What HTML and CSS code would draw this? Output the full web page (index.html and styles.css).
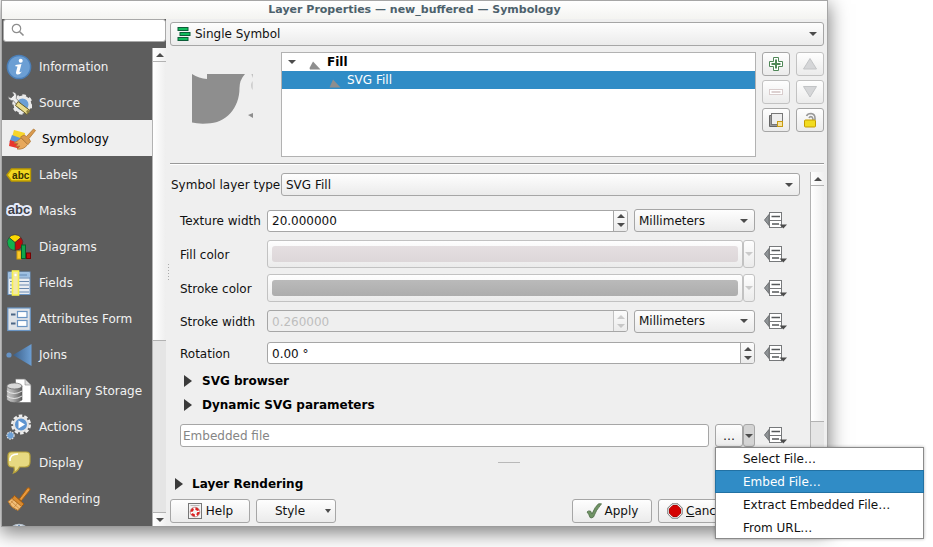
FILE: index.html
```html
<!DOCTYPE html>
<html lang="en">
<head>
<meta charset="utf-8">
<title>Layer Properties</title>
<link rel="stylesheet" href="styles.css">
</head>
<body>
<svg class="defs" aria-hidden="true">
  <symbol id="override" viewBox="0 0 23 17">
    <path d="M0.5 8 L5 2.5 V13.5 Z" fill="#8f9396" stroke="#6f7275"/>
    <rect x="5.5" y="0.5" width="12" height="15" fill="#fff" stroke="#77797b"/>
    <path d="M7.500 4.500 H16 M8 12 H15" stroke="#55585a" stroke-width="1.500"/>
    <path d="M6 8.500 H17.500" stroke="#77797b"/>
    <path d="M15.500 12.500 H23 L19.250 16.500 Z" fill="#4c4c4c"/>
  </symbol>
</svg>
<div class="window">
  <header class="titlebar">Layer Properties — new_buffered — Symbology</header>
  <div class="body">
    <aside class="sidebar">
      <div class="search">
        <svg width="14" height="14" viewBox="0 0 14 14" fill="none" stroke="#8d8d8d"><circle cx="5.500" cy="5.500" r="4.200" stroke-width="1.200"/><path d="M8.700 8.700 L12.500 12.500" stroke-width="1.600"/></svg>
        <input type="text" aria-label="Search">
      </div>
      <div class="side-body">
        <nav class="pages">
          <a href="#"><svg width="26" height="26" viewBox="0 0 26 26"><circle cx="13" cy="13" r="11.600" fill="#6c9fd4" stroke="#4b7fb8" stroke-width="1.500"/><circle cx="14.700" cy="6.700" r="2" fill="#fff"/><path d="M9.500 11 L15.500 10 L13.500 17.500 Q13.300 19 16 17.500 Q14 20.800 11.500 20.500 Q9.400 20 10.200 17.500 L11.500 12.500 L9.300 12.300 Z" fill="#fff"/></svg>Information</a>
          <a href="#"><svg width="26" height="26" viewBox="0 0 26 26"><circle cx="16.500" cy="14.500" r="7.500" fill="#6c9fd4" stroke="#e9e9e9" stroke-width="3"/><circle cx="16.500" cy="14.500" r="9" fill="none" stroke="#e9e9e9" stroke-width="2.500" stroke-dasharray="3.500 3.500"/><path d="M2 6.500 L5 8 L8 5 L6 2 Q10 1.500 10.500 5.500 L10.300 8.500 L14 12.500 L11 15 L7.500 10.800 Q3 11 2 6.500 Z" fill="#eee" stroke="#666" stroke-width=".7"/><path d="M12 11.500 L24 20.500 L21 24.500 L9.500 15.500 Z" fill="#eadb89" stroke="#665b25"/><circle cx="21.800" cy="21.600" r="1.500" fill="#8d7f40"/></svg>Source</a>
          <a href="#" class="current"><svg width="28" height="26" viewBox="0 0 28 26"><path d="M6 4 L17 7 L16 15 L4 11 Z" fill="#f7d52b"/><path d="M4 9 L15 13 L13 20 L1.500 16 Z" fill="#5c97d8"/><path d="M2 14 L14 18 L13 23 L1 20 Z" fill="#e9362c"/><path d="M13 12 L19.500 18.500 Q16 24 9 23 L12 20 L8 20.500 L10 17.500 L6 17 Q10 15 13 12 Z" fill="#e7a85c" stroke="#b17732" stroke-width=".8"/><path d="M12.500 11 L16 9 L18.500 10.500 L25.500 3 L27.500 4.500 L21 12.500 L22.500 15.500 L20 18.500 Z" fill="#d99a4e" stroke="#b17732" stroke-width=".8"/></svg>Symbology</a>
          <a href="#"><svg width="26" height="26" viewBox="0 0 26 26"><path d="M1 13 L5.500 7 H24.500 V19 H5.500 Z" fill="#f3d81f" stroke="#bd9b00" stroke-width="1.400"/><text x="14.700" y="16.500" text-anchor="middle" class="tag tag-small">abc</text></svg>Labels</a>
          <a href="#"><svg width="26" height="26" viewBox="0 0 26 26"><text x="13" y="16" text-anchor="middle" class="tag tag-mask">abc</text></svg>Masks</a>
          <a href="#"><svg width="26" height="26" viewBox="0 0 26 26"><g stroke="#333" stroke-width=".6"><path d="M9 8.500 L3 3.500 A7.800 7.800 0 0 1 15 3.500 Z" fill="#fcd900"/><path d="M9 8.500 L15 3.500 A7.800 7.800 0 0 1 9 16.300 Z" fill="#be0b0b"/><path d="M9 8.500 V16.300 A7.800 7.800 0 0 1 3 3.500 Z" fill="#12b04e"/></g><rect x="11" y="17" width="4" height="8" fill="#fcc92d" stroke="#d3a006"/><rect x="15.500" y="11" width="4" height="13.500" fill="#10a64a" stroke="#075f2a"/><rect x="20.500" y="19" width="4" height="5.500" fill="#b80d0d" stroke="#700"/></svg>Diagrams</a>
          <a href="#"><svg width="26" height="26" viewBox="0 0 26 26"><rect x="2" y="2" width="22" height="22.500" fill="#e9edf2" stroke="#6a95c4"/><path d="M2.500 5 H23.500" stroke="#9cbfe3" stroke-width="5"/><path d="M13 5 H21 M3 8 H24" stroke="#6288b3"/><path d="M4 11.500 H23 M4 15 H23 M4 18.500 H23 M4 22 H23" stroke="#6a89ae"/><rect x="6.500" y="1" width="6" height="24" fill="#f3e9a8" stroke="#f7f04e" stroke-width="1.600"/><circle cx="9.500" cy="5" r="1.200" fill="#fff"/></svg>Fields</a>
          <a href="#"><svg width="26" height="26" viewBox="0 0 26 26"><rect x="1.800" y="2" width="22.500" height="22.500" fill="#dfe3e8" stroke="#6a95c4" stroke-width="1.200"/><path d="M5 8.500 H9.500 M5 17.500 H9.500" stroke="#4c6685" stroke-width="2"/><rect x="11.500" y="5.500" width="9.500" height="6" fill="#fff" stroke="#6a95c4" stroke-width="1.200"/><rect x="11.500" y="14.500" width="9.500" height="6" fill="#fff" stroke="#6a95c4" stroke-width="1.200"/></svg>Attributes Form</a>
          <a href="#"><svg width="26" height="26" viewBox="0 0 26 26"><defs><linearGradient id="join"><stop offset="0" stop-color="#3c5f88"/><stop offset="1" stop-color="#6c9fd4"/></linearGradient></defs><circle cx="3" cy="13" r="2.600" fill="#6693c6"/><path d="M7 13 L25.500 2 V24 Z" fill="url(#join)"/></svg>Joins</a>
          <a href="#"><svg width="26" height="26" viewBox="0 0 26 26"><defs><linearGradient id="drum"><stop offset="0" stop-color="#c9c9c9"/><stop offset=".4" stop-color="#aaa"/><stop offset="1" stop-color="#5c5c5c"/></linearGradient></defs><path d="M9.500 1 H19 L25 7 V24.500 H9.500 Z" fill="#fff" stroke="#777" stroke-width=".8"/><path d="M19 1 V7 H25 Z" fill="#ddd" stroke="#888" stroke-width=".6"/><path d="M.8 8 V22 Q8 27.500 16 22 V8 Z" fill="url(#drum)" stroke="#555" stroke-width=".6"/><ellipse cx="8.400" cy="8" rx="7.600" ry="3" fill="#d8d8d8" stroke="#666" stroke-width=".7"/><path d="M.8 13 Q8 18 16 13 M.8 18 Q8 23 16 18" fill="none" stroke="#eee" stroke-width=".9"/></svg>Auxiliary Storage</a>
          <a href="#"><svg width="26" height="26" viewBox="0 0 26 26"><circle cx="15" cy="10.500" r="8.700" fill="none" stroke="#eee" stroke-width="2.600" stroke-dasharray="3.500 2"/><circle cx="15" cy="10.500" r="7" fill="#5e95d1" stroke="#e5e5e5" stroke-width="2"/><path d="M12.500 6.500 L19 10.500 L12.500 14.500 Z" fill="#fff"/><circle cx="4.500" cy="21.500" r="3.600" fill="#6c9fd4" stroke="#ddd" stroke-width="1.200" stroke-dasharray="1.600 1"/></svg>Actions</a>
          <a href="#"><svg width="26" height="26" viewBox="0 0 26 26"><path d="M5.500 2 H20 Q24 2 24 6 V12 Q24 17 19 17 H13.500 Q12 21 7.500 23 Q9 20 8 17 H6 Q2 17 2 12.500 V6 Q2 2 5.500 2 Z" fill="#e7d981" stroke="#b7a23a" stroke-width="1.200"/><path d="M4 11 Q3.500 4 12 4" fill="none" stroke="#fff" stroke-width="1.600"/></svg>Display</a>
          <a href="#"><svg width="26" height="26" viewBox="0 0 26 26"><path d="M13 13.500 L21.500 2 Q24.500 1 24 4 L15.500 14.500 Z" fill="#e9993c" stroke="#a85f10"/><path d="M8.500 9.500 L18 18 L15.500 20.500 L6 12.500 Z" fill="#d98a2e" stroke="#a05a12"/><path d="M6 12.500 L15.500 20.500 L12 24.500 Q5 22 2 15.500 Z" fill="#f1bd77" stroke="#b8762a"/><path d="M5 15 L13 22.500 M8 13.500 L4 18 M11.500 17 L8 21.500" stroke="#b8762a" stroke-width=".6"/></svg>Rendering</a>
          <a href="#" aria-label="Next page"><svg width="26" height="26" viewBox="0 0 26 26"><circle cx="13" cy="13" r="10.500" fill="#eef2f6" stroke="#b9c4cf" stroke-width="1.500"/><path d="M13 3 V7 M8 4 L9.500 7.500 M18 4 L16.500 7.500" stroke="#5b7fa8" stroke-width="1.600"/></svg></a>
        </nav>
        <div class="scrollbar">
          <span class="sb-btn"><i class="up"></i></span>
          <span class="thumb side-thumb"></span>
          <span class="track"></span>
          <span class="sb-btn sb-down"><i class="down"></i></span>
        </div>
      </div>
    </aside>
    <div class="splitter"><span></span></div>
    <main class="main">
      <div class="combo renderer">
        <svg width="14" height="14" viewBox="0 0 14 14" fill="#12bb5c" stroke="#0b5c38"><rect x="1" y=".5" width="10" height="3"/><rect x="3" y="5.500" width="10" height="3"/><rect x="1" y="10.500" width="10" height="3"/></svg>
        <select aria-label="Renderer"><option>Single Symbol</option></select>
        <i class="down"></i>
      </div>
      <section class="symbol">
        <svg class="preview" viewBox="0 0 111 105" fill="#8e8e8e"><path d="M22 22 Q29 26.500 37 27 V22 H75 Q69.500 28 69.500 36 C69.500 56 56 71.500 37 71.500 Q28 72 22 70.500 Z"/><path opacity=".5" d="M83 22 L81.500 22 L82.500 26 Z M82.500 29 Q80 33 82.500 38 Z"/><path d="M78 63 L83 61 V66 Z"/></svg>
        <ul class="tree">
          <li><i class="down"></i><svg width="12" height="9" viewBox="0 0 12 9"><path d="M1 8.500 L.500 7 L4 .5 L11.500 8.500 Z" fill="#8e8e8e"/></svg><b>Fill</b></li>
          <li class="child"><svg width="12" height="9" viewBox="0 0 12 9"><path d="M.5 8.500 L4 .5 L11.500 8.500 Z" fill="#8e8e8e"/></svg>SVG Fill</li>
        </ul>
        <div class="tools">
          <button type="button" aria-label="Add"><svg width="16" height="16" viewBox="0 0 16 16"><path d="M5.500 1.500 H10.500 V5.500 H14.500 V10.500 H10.500 V14.500 H5.500 V10.500 H1.500 V5.500 H5.500 Z" fill="#fff" stroke="#4f8757"/><path d="M8 3.500 V12.500 M3.500 8 H12.500" stroke="#4f8757" stroke-width="2"/></svg></button>
          <button type="button" aria-label="Move up" disabled><svg width="16" height="16" viewBox="0 0 16 16"><path d="M8 2.500 L14.500 13 H1.500 Z" fill="#d5d6d8" stroke="#c2c4c6"/></svg></button>
          <button type="button" aria-label="Remove" disabled><svg width="16" height="16" viewBox="0 0 16 16"><rect x="1.500" y="5.500" width="13" height="5" fill="#fff" stroke="#d9cdcd"/><path d="M3.500 8 H12.500" stroke="#ddd1d1" stroke-width="2"/></svg></button>
          <button type="button" aria-label="Move down" disabled><svg width="16" height="16" viewBox="0 0 16 16"><path d="M1.500 2.500 H14.500 L8 13 Z" fill="#d5d6d8" stroke="#c2c4c6"/></svg></button>
          <button type="button" aria-label="Duplicate"><svg width="16" height="16" viewBox="0 0 16 16"><path d="M1.500 3.500 H4 V12.500 H12 V14.500 H1.500 Z" fill="#999" stroke="#666"/><rect x="3.500" y="1.500" width="11" height="11" fill="#eee" stroke="#777"/><rect x="9.500" y="9.500" width="5" height="5" fill="#f7e3a0" stroke="#c79b13"/></svg></button>
          <button type="button" aria-label="Lock"><svg width="16" height="16" viewBox="0 0 16 16"><path d="M4.500 4 Q5.500 1.500 9 1.500 Q13 2 13 6 V8 M7 6 Q8 4 10 5 Q11 6 11 8" fill="none" stroke="#999" stroke-width="1.600"/><rect x="2.500" y="8" width="11" height="7" rx="1" fill="#f2dc20" stroke="#c49b00"/></svg></button>
        </div>
      </section>
      <hr>
      <section class="scroll">
        <div class="form">
          <div class="type-row">
            <label for="type">Symbol layer type</label>
            <div class="combo"><select id="type"><option>SVG Fill</option></select><i class="down"></i></div>
          </div>
          <div class="fields">
            <label for="tex">Texture width</label>
            <div class="spin"><input id="tex" type="text" value="20.000000"><span><i class="up"></i><i class="down"></i></span></div>
            <div class="combo"><select aria-label="Texture width unit"><option>Millimeters</option></select><i class="down"></i></div>
            <button type="button" class="override" aria-label="Override"><svg width="23" height="17"><use href="#override"/></svg></button>

            <label for="fillc">Fill color</label>
            <div class="color"><button type="button" id="fillc" disabled><span class="swatch"></span></button><button type="button" class="arrow" aria-label="Fill color menu" disabled><i class="down"></i></button></div>
            <button type="button" class="override" aria-label="Override"><svg width="23" height="17"><use href="#override"/></svg></button>

            <label for="strokec">Stroke color</label>
            <div class="color"><button type="button" id="strokec" disabled><span class="swatch dark"></span></button><button type="button" class="arrow" aria-label="Stroke color menu" disabled><i class="down"></i></button></div>
            <button type="button" class="override" aria-label="Override"><svg width="23" height="17"><use href="#override"/></svg></button>

            <label for="strokew">Stroke width</label>
            <div class="spin off"><input id="strokew" type="text" value="0.260000" disabled><span><i class="up"></i><i class="down"></i></span></div>
            <div class="combo"><select aria-label="Stroke width unit"><option>Millimeters</option></select><i class="down"></i></div>
            <button type="button" class="override" aria-label="Override"><svg width="23" height="17"><use href="#override"/></svg></button>

            <label for="rot">Rotation</label>
            <div class="spin wide"><input id="rot" type="text" value="0.00 °"><span><i class="up"></i><i class="down"></i></span></div>
            <button type="button" class="override" aria-label="Override"><svg width="23" height="17"><use href="#override"/></svg></button>
          </div>
          <button type="button" class="group"><i class="right"></i>SVG browser</button>
          <button type="button" class="group"><i class="right"></i>Dynamic SVG parameters</button>
          <div class="file-row">
            <input type="text" placeholder="Embedded file" aria-label="SVG file">
            <div class="browse">
              <button type="button">…</button><button type="button" class="arrow" aria-label="File menu"><i class="down"></i></button>
              <div class="menu" role="menu">
                <button type="button" role="menuitem">Select File…</button>
                <button type="button" role="menuitem" class="active">Embed File…</button>
                <button type="button" role="menuitem">Extract Embedded File…</button>
                <button type="button" role="menuitem">From URL…</button>
              </div>
            </div>
            <button type="button" class="override" aria-label="Override"><svg width="23" height="17"><use href="#override"/></svg></button>
          </div>
        </div>
        <div class="scrollbar">
          <span class="sb-btn"><i class="up"></i></span>
          <span class="thumb main-thumb"></span>
          <span class="track"></span>
        </div>
      </section>
      <div class="grip"></div>
      <button type="button" class="group rendering"><i class="right"></i>Layer Rendering</button>
      <footer class="actions">
        <button type="button"><svg width="16" height="16" viewBox="0 0 16 16"><rect x="1.500" y=".5" width="13" height="15" fill="#f3f3f3" stroke="#777"/><path d="M3.500 2.500 H12.500" stroke="#bbb"/><circle cx="8" cy="9" r="3.500" fill="none" stroke="#fff" stroke-width="2.600"/><circle cx="8" cy="9" r="3.500" fill="none" stroke="#d22" stroke-width="2.400" stroke-dasharray="3.500 2"/><circle cx="8" cy="9" r="4.800" fill="none" stroke="#a55" stroke-width=".6"/></svg>Help</button>
        <button type="button" class="style">Style<i class="down"></i></button>
        <span class="spacer"></span>
        <button type="button"><svg width="16" height="16" viewBox="0 0 16 16"><path d="M1 9 Q2 7.500 4.500 8 L6 11 Q9 3.500 12.500 .8 H15.500 Q10 7 7.500 14 Q5.500 15.500 4 14.500 Q3 11 1 9 Z" fill="#6f9364" stroke="#4d6b45" stroke-width=".8"/></svg>Apply</button>
        <button type="button" class="cancel"><svg width="16" height="16" viewBox="0 0 16 16"><path d="M5 .8 H11 L15.200 5 V11 L11 15.200 H5 L.8 11 V5 Z" fill="#f0f0f0" stroke="#777"/><path d="M5.800 2.500 H10.200 L13.500 5.800 V10.200 L10.200 13.500 H5.800 L2.500 10.200 V5.800 Z" fill="#d40000" stroke="#b00000"/></svg><span><u>C</u>ancel</span></button>
      </footer>
    </main>
  </div>
</div>
</body>
</html>
```
FILE: styles.css
```css
* { box-sizing: border-box; }

body {
  margin: 0;
  padding: 0 105px 20px 1px;
  height: 100vh;
  overflow: hidden;
  background: #fff;
  color: #111;
  font: 12px/18px "DejaVu Sans", sans-serif;
}

button, input, select { font: inherit; color: inherit; margin: 0; }
.defs { position: absolute; width: 0; height: 0; }
svg { flex: none; display: block; }

/* window frame */
.window {
  display: flex;
  flex-direction: column;
  height: 100%;
  border: 1px solid #a6a6a6;
  border-bottom-color: #9c9c9c;
  background: #efefef;
  box-shadow: 0 5px 18px 1px rgba(0, 0, 0, .5);
}
.titlebar {
  flex: none;
  height: 18px;
  background: linear-gradient(#fff, #f4f4f1);
  color: #4c616c;
  font-size: 11px;
  font-weight: bold;
  text-align: center;
}
.body { display: flex; flex: 1; min-height: 0; }

/* triangles */
.up, .down, .right { display: block; flex: none; width: 0; height: 0; border: 4px solid transparent; }
.up { border-top: 0; border-bottom-color: #4c4c4c; }
.down { border-bottom: 0; border-top-color: #4c4c4c; }
.right { border-width: 6px 0 6px 8px; border-left-color: #3a3a3a; }

/* sidebar */
.sidebar { display: flex; flex-direction: column; flex: none; width: 164px; }
.search { position: relative; background: #5d5d5d; height: 29px; padding: 0 0 0 1px; }
.search input {
  display: block;
  width: 100%;
  height: 23px;
  padding: 0 6px 0 28px;
  border: 1px solid #a9a9a9;
  border-radius: 3px;
  background: #fff;
}
.search svg { position: absolute; left: 9px; top: 4px; }
.side-body { display: flex; flex: 1; min-height: 0; }
.pages { flex: 1; min-width: 0; overflow: hidden; background: #5d5d5d; }
.pages a {
  display: flex;
  align-items: center;
  gap: 7px;
  height: 36px;
  padding: 1px 0 0 4px;
  color: #f2f2f2;
  text-decoration: none;
  white-space: nowrap;
}
.pages .current { background: #efefef; color: #000; padding-left: 6px; gap: 6px; }
.tag { font-family: "Liberation Sans", sans-serif; font-weight: bold; fill: #3a3200; }
.tag-small { font-size: 10px; }
.tag-mask { font-size: 13px; fill: #3c4048; stroke: #e6ebfa; stroke-width: 4px; stroke-linejoin: round; paint-order: stroke; }

.scrollbar { display: flex; flex-direction: column; flex: none; width: 14px; border-left: 1px solid #b2b2b2; background: #e5e5e5; }
.sb-btn {
  display: flex;
  align-items: center;
  justify-content: center;
  flex: none;
  height: 14px;
  border-bottom: 1px solid #b2b2b2;
  background: linear-gradient(90deg, #fff, #f0f0f0);
}
.sb-down { border-bottom: 0; border-top: 1px solid #b2b2b2; }
.thumb { background: linear-gradient(90deg, #fff, #eee); border-bottom: 1px solid #b2b2b2; }
.track { flex: 1; }
.side-thumb { flex: 0 0 62%; max-height: 279px; }
.main-thumb { flex: 0 0 84%; max-height: 236px; }

.splitter { display: flex; align-items: center; justify-content: center; flex: none; width: 4px; }
.splitter span { width: 1px; height: 17px; background: repeating-linear-gradient(#aaa 0 1px, transparent 1px 3px); }

/* main column */
.main { display: flex; flex-direction: column; flex: 1; min-width: 0; padding: 3px 3px 3px 0; }

.combo { position: relative; height: 23px; }
.combo select {
  appearance: none;
  display: block;
  width: 100%;
  height: 100%;
  padding: 0 20px 0 4px;
  border: 1px solid #a6a6a6;
  border-radius: 3px;
  background: linear-gradient(#fefefe, #ebebeb);
}
.combo .down { position: absolute; right: 7px; top: 50%; margin-top: -2px; pointer-events: none; }
.renderer { flex: none; height: 24px; }
.renderer select { padding-left: 24px; }
.renderer svg { position: absolute; left: 7px; top: 5px; }

.symbol { display: flex; flex: none; height: 105px; margin-top: 6px; }
.preview { width: 111px; height: 105px; }
.tree { flex: 1; margin: 0; padding: 0; list-style: none; border: 1px solid #b2b2b2; background: #fff; }
.tree li { display: flex; align-items: center; height: 18px; padding-left: 6px; color: #000; }
.tree svg { margin: 6px 6px 0 13px; }
.tree .down { margin-bottom: 1px; }
.tree .child { background: #308cc6; color: #fff; padding-left: 34px; }

.tools { display: grid; grid-template-columns: 28px 28px; grid-auto-rows: 24px; gap: 4px 6px; margin-left: 6px; }
.tools button, .actions button, .browse > button, .color button {
  display: flex;
  align-items: center;
  justify-content: center;
  padding: 0;
  border: 1px solid #a6a6a6;
  border-radius: 3px;
  background: linear-gradient(#fefefe, #ebebeb);
}
.tools button:disabled, .color button:disabled { border-color: #c2c2c2; }

hr { flex: none; width: 100%; height: 2px; margin: 6px 0 7px; border: 0; border-top: 1px solid #999; background: #fff; }

/* scrolled form */
.scroll { display: flex; flex: 1; gap: 10px; min-height: 0; }
.form { flex: 1; min-width: 0; padding-top: 1px; }
.type-row { display: flex; align-items: center; }
.type-row label { width: 111px; padding-left: 1px; white-space: nowrap; }
.type-row .combo { flex: 1; }
.fields {
  display: grid;
  grid-template-columns: 81px 1fr 121px 29px;
  grid-template-rows: 33px 34px 34px 32px 32px;
  column-gap: 6px;
  align-items: center;
  margin-top: 8px;
  padding: 0 10px;
}
.fields label { padding-top: 1px; white-space: nowrap; }
.color, .wide { grid-column: 2 / 4; }

.spin { display: flex; height: 22px; border: 1px solid #a6a6a6; border-radius: 3px; background: #fff; overflow: hidden; }
.spin input { flex: 1; min-width: 0; padding: 1px 4px 0; border: 0; background: none; }
.spin span {
  display: flex;
  flex-direction: column;
  align-items: center;
  justify-content: center;
  gap: 5px;
  width: 14px;
  border-left: 1px solid #a6a6a6;
  background: linear-gradient(#fcfcfc, #ebebeb);
}
.off { background: #efefef; }
.off input { color: #bebebe; }
.off span { border-color: #c2c2c2; }
.off i, .color i { opacity: .25; }

.color { display: flex; height: 28px; }
.color button:first-child { flex: 1; padding: 0 4px; }
.swatch { display: block; width: 100%; height: 16px; border-radius: 3px; background: linear-gradient(#e5dfe1, #ddd7d9); }
.swatch.dark { background: linear-gradient(#bababa, #adadad); }
.color .arrow, .browse .arrow { width: 12px; }

.override { display: flex; justify-content: center; width: 29px; padding: 0; border: 0; background: none; }

.group { display: flex; align-items: center; gap: 10px; height: 24px; padding: 0 0 0 14px; border: 0; background: none; font-weight: bold; color: #000; }

.file-row { display: flex; align-items: center; gap: 6px; margin-top: 7px; padding: 0 10px; }
.file-row input { flex: 1; min-width: 0; height: 23px; padding: 0 2px; border: 1px solid #a6a6a6; border-radius: 3px; background: #fff; }
.file-row input::placeholder { color: #858585; opacity: 1; }
.browse { position: relative; display: flex; height: 23px; }
.browse > button { width: 28px; }
.browse .arrow { background: #d4d4d4; }

.menu {
  position: absolute;
  left: 0;
  top: 100%;
  z-index: 2;
  width: 209px;
  background: #fff;
  box-shadow: inset 0 0 0 1px #8a8a8a, 0 0 3px rgba(0, 0, 0, .3);
}
.menu button { display: block; width: 100%; height: 23px; padding: 0 27px; border: 1px solid transparent; background: none; text-align: left; white-space: nowrap; color: #111; }
.menu .active { background: #308cc6; border-color: #2271a3; color: #fff; }

.grip { flex: none; align-self: center; width: 22px; height: 1px; margin: 6px 0 9px 24px; background: #b9b9b9; }
.rendering { flex: none; margin-bottom: 3px; padding-left: 5px; gap: 9px; }

.actions { display: flex; flex: none; gap: 6px; padding-right: 86px; }
.actions button { gap: 3px; width: 80px; height: 24px; }
.actions .style { position: relative; padding-right: 12px; }
.style .down { position: absolute; right: 4px; top: 9px; border-width: 4px 3px 0; }
.actions .cancel { justify-content: flex-start; padding-left: 8px; }
.spacer { flex: 1; }
```
